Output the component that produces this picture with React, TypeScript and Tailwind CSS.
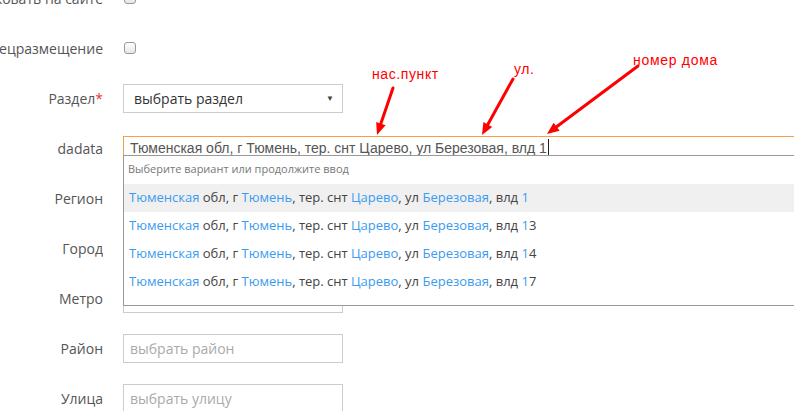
import React from 'react';

const BLUE = 'text-[#3a9bf0]';

const SUGGESTIONS = ['1', '13', '14', '17'];

const Label: React.FC<{ children: React.ReactNode }> = ({ children }) => (
  <div className="flex w-[103px] shrink-0 justify-end overflow-hidden">
    <span className="shrink-0 whitespace-nowrap text-[14px] text-[#555]">{children}</span>
  </div>
);

const Checkbox: React.FC = () => (
  <span className="ml-[1px] block h-[12px] w-[12px] rounded-[3px] border border-[#999] bg-gradient-to-b from-white to-[#e6e6e6]" />
);

const TextInput: React.FC<{ placeholder?: string }> = ({ placeholder }) => (
  <div className="flex h-[29px] w-[220px] items-center border border-[#ccc] px-[6px] text-[14px] text-[#aaa]">
    {placeholder}
  </div>
);

const Row: React.FC<{ label: React.ReactNode; children: React.ReactNode }> = ({ label, children }) => (
  <div className="flex h-[50px] items-center">
    <Label>{label}</Label>
    <div className="ml-[20px] flex-1">{children}</div>
  </div>
);

const Suggestion: React.FC<{ house: string; active?: boolean }> = ({ house, active }) => (
  <div className={`flex h-[28px] items-center whitespace-nowrap px-[5px] text-[13px] text-[#444] ${active ? 'bg-[#f0f0f0]' : ''}`}>
    <span className={BLUE}>Тюменская</span>&nbsp;обл, г&nbsp;<span className={BLUE}>Тюмень</span>, тер. снт&nbsp;
    <span className={BLUE}>Царево</span>, ул&nbsp;<span className={BLUE}>Березовая</span>, влд&nbsp;
    <span className={BLUE}>{house.slice(0, 1)}</span>
    {house.slice(1)}
  </div>
);

export default function App() {
  return (
    <div className="relative h-[411px] w-[794px] overflow-hidden bg-white font-['Open_Sans',sans-serif]">
      <div className="mt-[-27px] flex flex-col">
        <Row label="Публиковать на сайте">
          <Checkbox />
        </Row>
        <Row label="Спецразмещение">
          <Checkbox />
        </Row>
        <Row
          label={
            <>
              Раздел<span className="text-[#e33]">*</span>
            </>
          }
        >
          <div className="flex h-[29px] w-[220px] items-center justify-between border border-[#ccc] pl-[10px] pr-[8px] text-[14px] text-[#333]">
            <span>выбрать раздел</span>
            <span className="text-[8px] text-[#444]">▼</span>
          </div>
        </Row>
        <Row label="dadata">
          <div className="relative mt-[-1px]">
            <div className="flex h-[24px] w-[700px] items-start border border-b-0 border-[#f4a047] pl-[6px] pt-[1px] font-['Liberation_Sans',sans-serif] text-[14px] text-[#555]">
              <span className="whitespace-nowrap">Тюменская обл, г Тюмень, тер. снт Царево, ул Березовая, влд 1</span>
              <span className="ml-[1px] mt-[1px] h-[16px] w-[1px] bg-[#222]" />
            </div>
            <div className="absolute left-0 top-[19px] z-10 w-[700px] border border-r-0 border-[#999] bg-white pb-[9px]">
              <div className="flex h-[28px] items-center px-[4px] text-[11px] text-[#777]">
                Выберите вариант или продолжите ввод
              </div>
              {SUGGESTIONS.map((h, i) => (
                <Suggestion key={h} house={h} active={i === 0} />
              ))}
            </div>
          </div>
        </Row>
        <Row label="Регион">
          <TextInput />
        </Row>
        <Row label="Город">
          <TextInput />
        </Row>
        <Row label="Метро">
          <TextInput />
        </Row>
        <Row label="Район">
          <TextInput placeholder="выбрать район" />
        </Row>
        <Row label="Улица">
          <TextInput placeholder="выбрать улицу" />
        </Row>
      </div>

      {/* annotation arrows drawn over the screenshot */}
      <svg className="pointer-events-none absolute inset-0 z-20" width="794" height="411">
        <g fill="#f00" fontFamily="Liberation Sans, sans-serif" fontSize="14">
          <text x="372" y="79" letterSpacing="0.6">нас.пункт</text>
          <text x="514" y="74" letterSpacing="0.6">ул.</text>
          <text x="633" y="65" letterSpacing="0.7">номер дома</text>
        </g>
        <g stroke="#f00" strokeWidth="3" strokeLinecap="round">
          <line x1="393" y1="88" x2="380.9" y2="123.6" />
          <line x1="513" y1="79" x2="487.8" y2="124.5" />
          <line x1="638" y1="66" x2="556.6" y2="126.8" />
        </g>
        <g fill="#f00">
          <polygon points="377,135 385.6,125.2 376.2,122" />
          <polygon points="482,135 492.2,126.9 483.4,122.1" />
          <polygon points="547,134 559.6,130.8 553.6,122.8" />
        </g>
      </svg>
    </div>
  );
}
